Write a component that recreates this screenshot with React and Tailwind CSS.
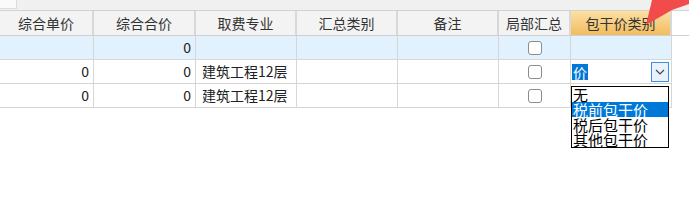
import React from 'react';

const cols = [
  { title: '综合单价', w: 'w-[94px]' },
  { title: '综合合价', w: 'w-[102px]' },
  { title: '取费专业', w: 'w-[101px]' },
  { title: '汇总类别', w: 'w-[101px]' },
  { title: '备注', w: 'w-[101px]' },
  { title: '局部汇总', w: 'w-[72px]' },
  { title: '包干价类别', w: 'w-[101px]' },
];

const rows = [
  { bg: 'bg-[#e1f1fd]', cells: ['', '0', '', '', '', 'check', ''] },
  { bg: 'bg-white', cells: ['0', '0', '建筑工程12层', '', '', 'check', 'combo'] },
  { bg: 'bg-white', cells: ['0', '0', '建筑工程12层', '', '', 'check', ''] },
];

const Check = () => (
  <div className="w-[14px] h-[14px] rounded-[3px] border border-[#8c8c8c] bg-white" />
);

const Combo = () => (
  <div className="flex items-center justify-between w-full h-full pl-[1px] pr-[2px]">
    <span className="bg-[#0078d7] text-white leading-[16px] px-[1px]">价</span>
    <div className="w-[18px] h-[20px] border border-[#3c8fd8] bg-[#e8f2fc] flex items-center justify-center">
      <svg width="10" height="6" viewBox="0 0 10 6">
        <path d="M1 1 L5 5 L9 1" fill="none" stroke="#444" strokeWidth="1.2" />
      </svg>
    </div>
  </div>
);

const Cell = ({ value, i }) => {
  const base = `${cols[i].w} shrink-0 h-full border-r border-[#d6d6d6] flex items-center`;
  if (value === 'check') return <div className={`${base} justify-center`}><Check /></div>;
  if (value === 'combo') return <div className={base}><Combo /></div>;
  const align = i < 2 ? 'justify-end pr-[4px]' : 'justify-start pl-[6px]';
  return <div className={`${base} ${align}`}>{value}</div>;
};

export default function App() {
  return (
    <div
      className="relative w-[689px] h-[214px] bg-white overflow-hidden text-[14px] text-[#222]"
      style={{ fontFamily: '"Noto Sans CJK SC", "Noto Sans", sans-serif' }}
    >
      <div className="h-[11px] bg-[#f0f0f0] border-b border-[#d2d2d2] flex">
        <div className="w-[17px] h-[9px] bg-[#fafafa] border-r border-b border-[#dcdcdc]" />
      </div>
      <div className="h-[25px] flex border-b border-[#d0d0d0]">
        {cols.map((c, i) => (
          <div
            key={c.title}
            className={`${c.w} shrink-0 h-full flex items-center justify-center border-r-2 border-[#d8d8d8] text-[#333] ${
              i === 6 ? 'bg-gradient-to-b from-[#fbe0a3] to-[#f1bc5e]' : 'bg-[#f3f3f3]'
            }`}
          >
            {c.title}
          </div>
        ))}
      </div>
      {rows.map((r, ri) => (
        <div key={ri} className={`h-[24px] flex ${r.bg} border-b border-[#d6d6d6] w-[672px]`}>
          {r.cells.map((v, i) => (
            <Cell key={i} value={v} i={i} />
          ))}
        </div>
      ))}

      <div className="absolute left-[571px] top-[86px] w-[98px] h-[62px] bg-white border border-black text-[15px] leading-[15px] text-black overflow-hidden">
        <div className="pl-[1px] h-[15px]">无</div>
        <div className="pl-[1px] h-[15px] bg-[#0078d7] text-white">税前包干价</div>
        <div className="pl-[1px] h-[15px]">税后包干价</div>
        <div className="pl-[1px] h-[15px]">其他包干价</div>
      </div>

      <svg className="absolute left-0 top-0" width="689" height="214" viewBox="0 0 689 214">
        <polygon points="646,25 652,0 668,0 689,-6 689,4 672,10" fill="#f24b4b" />
      </svg>
    </div>
  );
}
